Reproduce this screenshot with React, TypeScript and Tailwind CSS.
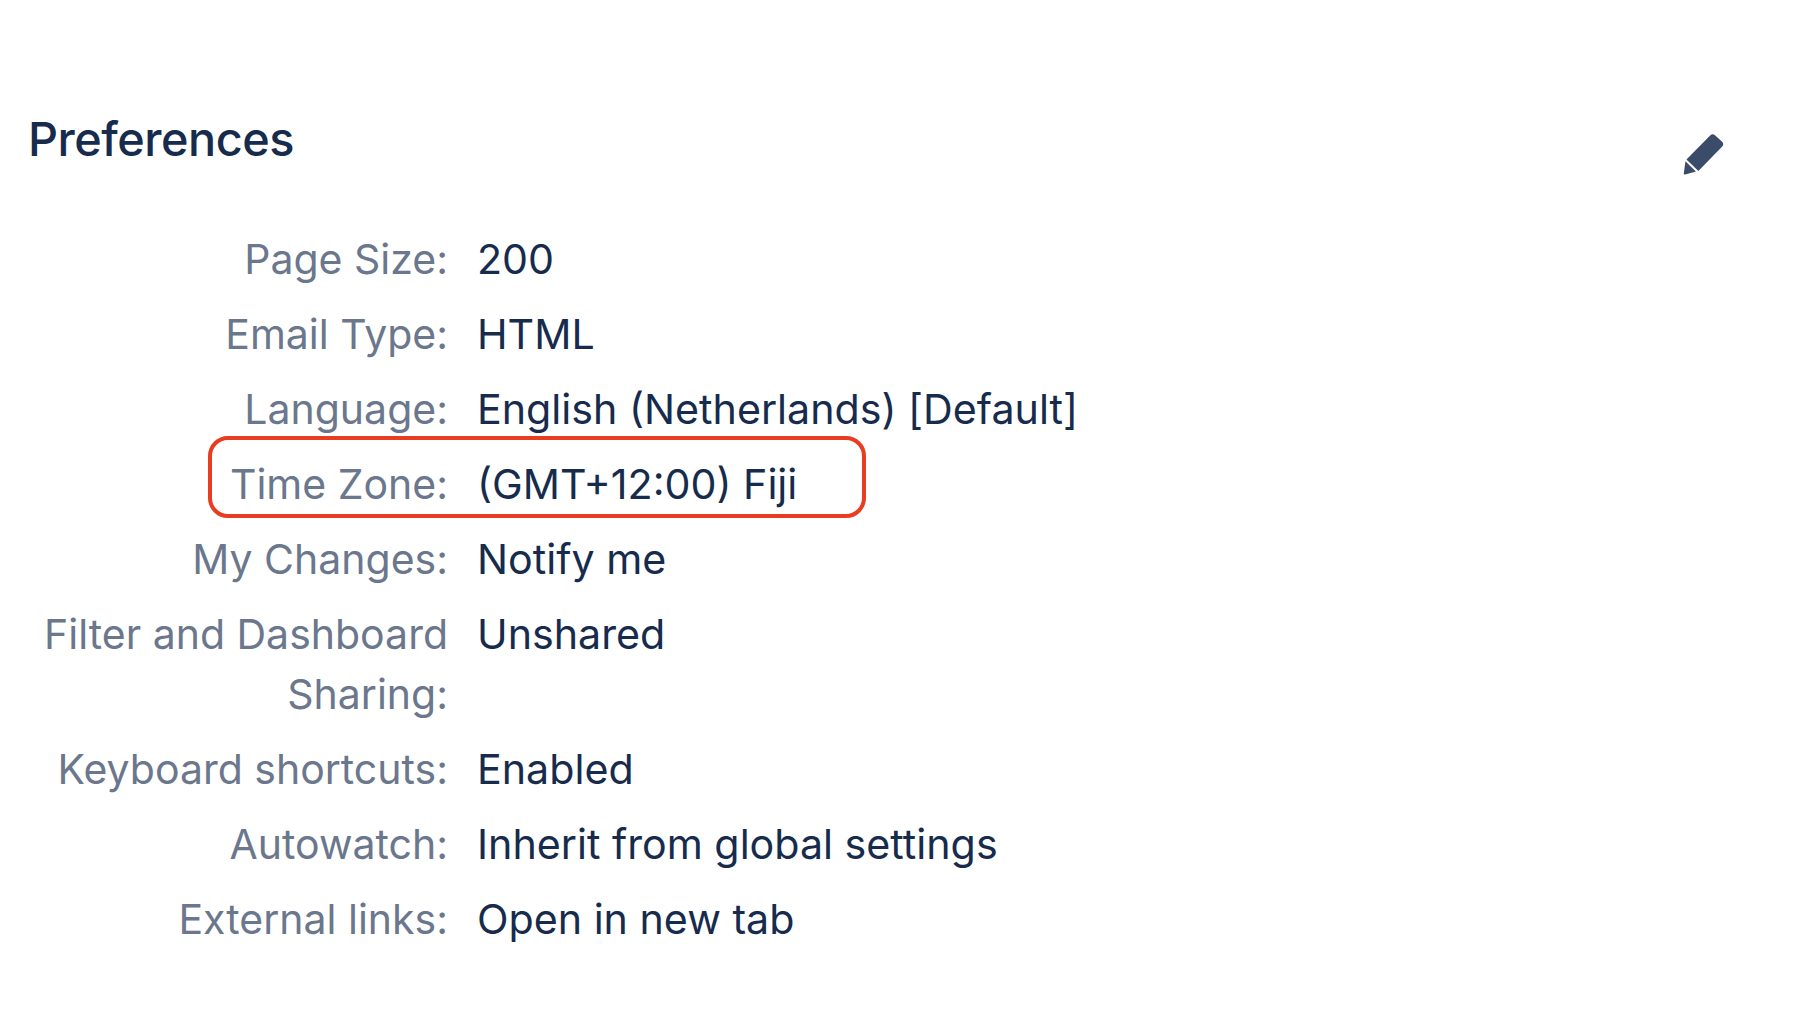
import React from "react";

const rows = [
  { label: "Page Size:", value: "200" },
  { label: "Email Type:", value: "HTML" },
  { label: "Language:", value: "English (Netherlands) [Default]" },
  { label: "Time Zone:", value: "(GMT+12:00) Fiji", highlight: true },
  { label: "My Changes:", value: "Notify me" },
  { label: "Filter and Dashboard Sharing:", value: "Unshared" },
  { label: "Keyboard shortcuts:", value: "Enabled" },
  { label: "Autowatch:", value: "Inherit from global settings" },
  { label: "External links:", value: "Open in new tab" },
];

function PencilIcon() {
  return (
    <svg width="43" height="43" viewBox="0 0 42 42" className="text-[#3b4c6b]">
      <path
        d="M26.5 2.5a3.6 3.6 0 0 1 5 0l6.5 5.8a3.6 3.6 0 0 1 .1 5.1L15 37 3.4 25.8 26.5 2.5Z"
        fill="currentColor"
      />
      <path d="M2.4 27.6 12.6 37.6 2.2 40.6a1.2 1.2 0 0 1-1.4-1.5L2.4 27.6Z" fill="currentColor" />
    </svg>
  );
}

export default function App() {
  return (
    <div className="min-h-screen bg-white pt-[108px] pl-[28px] pr-[80px] font-['Inter',sans-serif] text-[41.2px] leading-[60px] text-[#172b4d]">
      <div className="flex items-start justify-between">
        <h1 className="text-[46.8px] leading-[62px] font-[550] tracking-[-0.01em]">Preferences</h1>
        <div className="mt-[25px]">
          <PencilIcon />
        </div>
      </div>

      <div className="mt-[53px] flex flex-col gap-[15px]">
        {rows.map((row) => (
          <div key={row.label} className="relative flex gap-[29px]">
            {row.highlight && (
              <div className="absolute left-[180px] top-[-18px] h-[82px] w-[658px] rounded-[20px] border-4 border-[#e93d22]" />
            )}
            <div className="w-[420px] text-right text-[41px] text-[#6b778c]">{row.label}</div>
            <div>{row.value}</div>
          </div>
        ))}
      </div>
    </div>
  );
}
